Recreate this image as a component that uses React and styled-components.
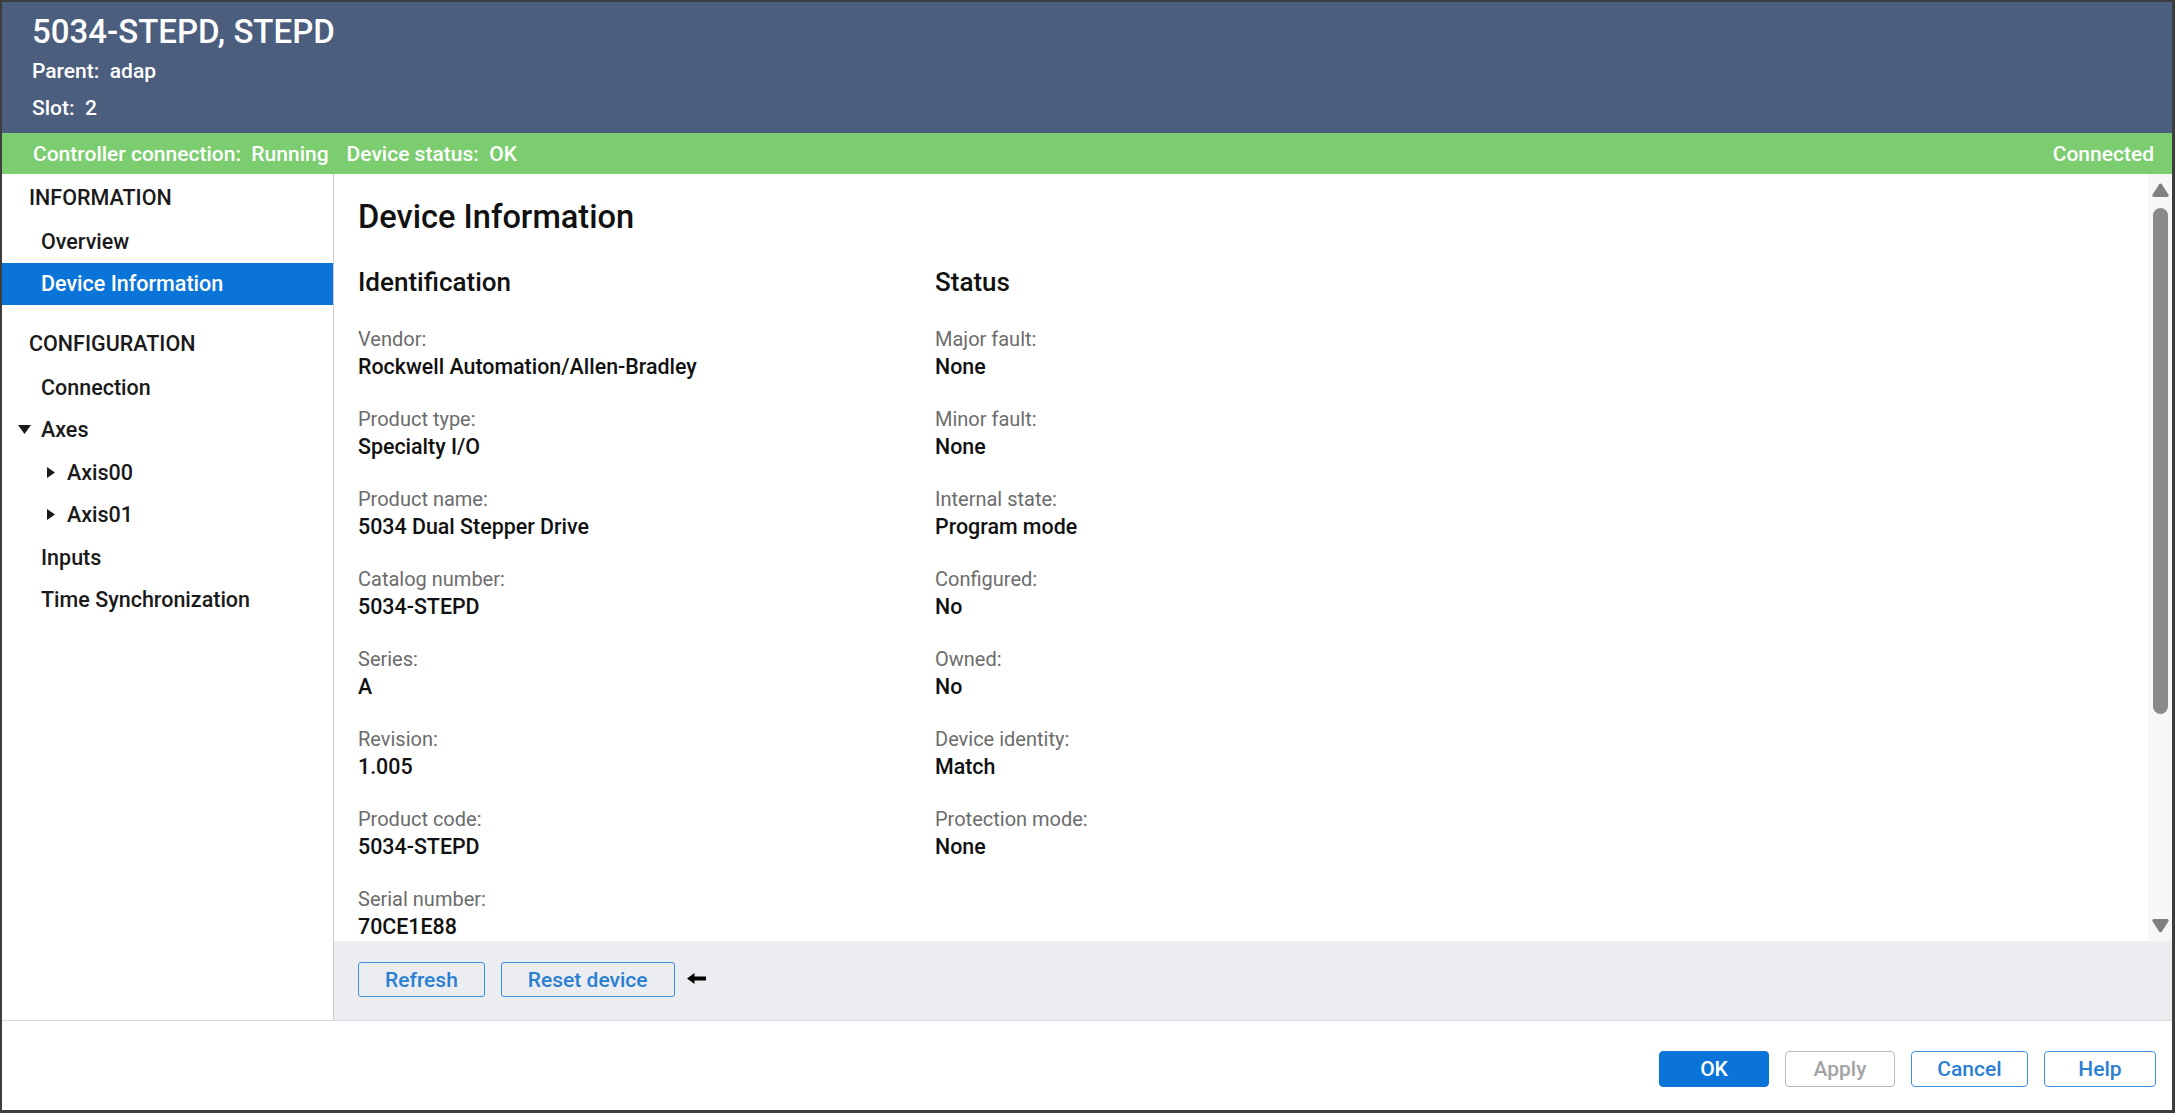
import React from 'react'
import styled, { createGlobalStyle } from 'styled-components'

const GlobalStyle = createGlobalStyle`
  html, body {
    margin: 0;
    padding: 0;
    background: #ffffff;
  }
  body {
    font-family: Roboto, "Liberation Sans", Arial, sans-serif;
  }
  * {
    box-sizing: border-box;
  }
`

const Window = styled.div`
  width: 2175px;
  height: 1113px;
  display: flex;
  flex-direction: column;
  background: #ffffff;
  border-style: solid;
  border-color: #3d3d3d;
  border-width: 2px 3px 3px 2px;
  overflow: hidden;
`

const Header = styled.header`
  height: 131px;
  flex: none;
  padding: 10px 30px 0;
  background: #4b5e7e;
  color: #ffffff;
`

const Title = styled.h1`
  margin: 0;
  font-size: 33px;
  line-height: 40px;
  font-weight: 500;
`

const HeaderLine = styled.div`
  font-size: 21px;
  font-weight: 500;
  line-height: ${(p) => p.$lh}px;
  white-space: pre;
`

const StatusBar = styled.div`
  height: 41px;
  flex: none;
  display: flex;
  align-items: center;
  gap: 18px;
  padding: 0 18px 0 31px;
  background: #7ccd70;
  color: #ffffff;
  font-size: 21px;
  font-weight: 500;
  white-space: pre;
`

const Connected = styled.span`
  margin-left: auto;
`

const Body = styled.div`
  flex: 1;
  display: flex;
  min-height: 0;
`

const Sidebar = styled.nav`
  width: 332px;
  flex: none;
  border-right: 1px solid #c9cbcf;
  display: flex;
  flex-direction: column;
`

const SectionTitle = styled.div`
  height: 46px;
  display: flex;
  align-items: center;
  padding-left: 27px;
  margin-top: ${(p) => (p.$first ? 0 : 15)}px;
  font-size: 21.5px;
  font-weight: 500;
  color: #1a1a1a;
`

const NavItem = styled.div`
  height: 42.5px;
  flex: none;
  display: flex;
  align-items: center;
  padding-left: ${(p) => p.$indent}px;
  font-size: 21.5px;
  font-weight: 500;
  color: ${(p) => (p.$selected ? '#ffffff' : '#1a1a1a')};
  background: ${(p) => (p.$selected ? '#0b74d8' : 'transparent')};
`

const CaretBox = styled.span`
  width: ${(p) => p.$w}px;
  flex: none;
  display: flex;
  align-items: center;
`

const Content = styled.main`
  flex: 1;
  display: flex;
  flex-direction: column;
  min-width: 0;
`

const ScrollArea = styled.div`
  flex: 1;
  display: flex;
  min-height: 0;
  overflow: hidden;
`

const Page = styled.section`
  flex: 1;
  padding: 23px 24px 0;
  color: #111111;
`

const PageTitle = styled.h2`
  margin: 0;
  font-size: 32.6px;
  line-height: 40px;
  font-weight: 500;
`

const Columns = styled.div`
  display: grid;
  grid-template-columns: 577px 1fr;
  margin-top: 29px;
`

const GroupTitle = styled.h3`
  margin: 0 0 27px;
  font-size: 26px;
  line-height: 32px;
  font-weight: 500;
`

const Field = styled.div`
  margin-bottom: 24px;
`

const Label = styled.div`
  font-size: 20px;
  line-height: 28px;
  color: #6c6c6c;
`

const Value = styled.div`
  font-size: 21.4px;
  line-height: 28px;
  font-weight: 500;
  color: #111111;
`

const Scrollbar = styled.div`
  width: 24px;
  flex: none;
  display: flex;
  flex-direction: column;
  align-items: center;
  padding: 9px 0 8px;
  background: #f7f7f7;
`

const Thumb = styled.div`
  width: 15px;
  height: 506px;
  margin-top: 11px;
  border-radius: 8px;
  background: #8a8a8a;
`

const DownArrow = styled.div`
  margin-top: auto;
  display: flex;
`

const ActionBar = styled.div`
  height: 79px;
  flex: none;
  display: flex;
  align-items: flex-start;
  gap: 16px;
  padding: 21px 24px 0;
  background: #ebedf0;
`

const OutlineButton = styled.button`
  height: 35px;
  padding: 0 26px;
  border: 1.5px solid #3f8fdf;
  border-radius: 3px;
  background: transparent;
  color: #2a7fd3;
  font-family: inherit;
  font-size: 21px;
  font-weight: 500;
`

const Pointer = styled.span`
  height: 35px;
  display: flex;
  align-items: center;
  margin-top: -1px;
  margin-left: -4px;
`

const Footer = styled.footer`
  height: 90px;
  flex: none;
  display: flex;
  justify-content: flex-end;
  align-items: flex-start;
  gap: 16px;
  padding: 30px 16px 0 0;
  border-top: 1px solid #d6d8dc;
`

const DialogButton = styled.button`
  width: ${(p) => p.$w || 110}px;
  height: 36px;
  border-radius: 4px;
  font-family: inherit;
  font-size: 21px;
  font-weight: 500;
  border: 1.5px solid
    ${(p) => (p.$variant === 'primary' ? '#0b74d8' : p.$variant === 'disabled' ? '#b9b9b9' : '#3f8fdf')};
  background: ${(p) => (p.$variant === 'primary' ? '#0b74d8' : '#ffffff')};
  color: ${(p) => (p.$variant === 'primary' ? '#ffffff' : p.$variant === 'disabled' ? '#a3a3a3' : '#2a7fd3')};
`

const CaretDown = () => (
  <svg width="13" height="9" viewBox="0 0 13 9">
    <path d="M0 0 H13 L6.5 9 Z" fill="#1a1a1a" />
  </svg>
)

const CaretRight = () => (
  <svg width="8" height="11" viewBox="0 0 8 11">
    <path d="M0 0 L8 5.5 L0 11 Z" fill="#1a1a1a" />
  </svg>
)

const ScrollUp = () => (
  <svg width="17" height="14" viewBox="0 0 17 14">
    <path d="M7.2 1.2 Q8.5 -0.4 9.8 1.2 L16.4 11.6 Q17.3 14 14.8 14 H2.2 Q-0.3 14 0.6 11.6 Z" fill="#808080" />
  </svg>
)

const ScrollDown = () => (
  <svg width="17" height="14" viewBox="0 0 17 14">
    <path d="M7.2 12.8 Q8.5 14.4 9.8 12.8 L16.4 2.4 Q17.3 0 14.8 0 H2.2 Q-0.3 0 0.6 2.4 Z" fill="#808080" />
  </svg>
)

const LeftArrow = () => (
  <svg width="19" height="11" viewBox="0 0 19 11">
    <path d="M0 5.5 L7.5 0 V3.5 H19 V7.5 H7.5 V11 Z" fill="#000000" />
  </svg>
)

const identification = [
  ['Vendor:', 'Rockwell Automation/Allen-Bradley'],
  ['Product type:', 'Specialty I/O'],
  ['Product name:', '5034 Dual Stepper Drive'],
  ['Catalog number:', '5034-STEPD'],
  ['Series:', 'A'],
  ['Revision:', '1.005'],
  ['Product code:', '5034-STEPD'],
  ['Serial number:', '70CE1E88'],
]

const status = [
  ['Major fault:', 'None'],
  ['Minor fault:', 'None'],
  ['Internal state:', 'Program mode'],
  ['Configured:', 'No'],
  ['Owned:', 'No'],
  ['Device identity:', 'Match'],
  ['Protection mode:', 'None'],
]

function FieldList({ title, rows }) {
  return (
    <div>
      <GroupTitle>{title}</GroupTitle>
      {rows.map(([label, value]) => (
        <Field key={label}>
          <Label>{label}</Label>
          <Value>{value}</Value>
        </Field>
      ))}
    </div>
  )
}

export default function App() {
  return (
    <>
      <GlobalStyle />
      <Window>
        <Header>
          <Title>5034-STEPD, STEPD</Title>
          <HeaderLine $lh={38}>{'Parent:  adap'}</HeaderLine>
          <HeaderLine $lh={36}>{'Slot:  2'}</HeaderLine>
        </Header>

        <StatusBar>
          <span>{'Controller connection:  Running'}</span>
          <span>{'Device status:  OK'}</span>
          <Connected>Connected</Connected>
        </StatusBar>

        <Body>
          <Sidebar>
            <SectionTitle $first>INFORMATION</SectionTitle>
            <NavItem $indent={39}>Overview</NavItem>
            <NavItem $indent={39} $selected>Device Information</NavItem>

            <SectionTitle>CONFIGURATION</SectionTitle>
            <NavItem $indent={39}>Connection</NavItem>
            <NavItem $indent={16}>
              <CaretBox $w={23}><CaretDown /></CaretBox>
              Axes
            </NavItem>
            <NavItem $indent={45}>
              <CaretBox $w={20}><CaretRight /></CaretBox>
              Axis00
            </NavItem>
            <NavItem $indent={45}>
              <CaretBox $w={20}><CaretRight /></CaretBox>
              Axis01
            </NavItem>
            <NavItem $indent={39}>Inputs</NavItem>
            <NavItem $indent={39}>Time Synchronization</NavItem>
          </Sidebar>

          <Content>
            <ScrollArea>
              <Page>
                <PageTitle>Device Information</PageTitle>
                <Columns>
                  <FieldList title="Identification" rows={identification} />
                  <FieldList title="Status" rows={status} />
                </Columns>
              </Page>
              <Scrollbar>
                <ScrollUp />
                <Thumb />
                <DownArrow><ScrollDown /></DownArrow>
              </Scrollbar>
            </ScrollArea>

            <ActionBar>
              <OutlineButton>Refresh</OutlineButton>
              <OutlineButton>Reset device</OutlineButton>
              <Pointer><LeftArrow /></Pointer>
            </ActionBar>
          </Content>
        </Body>

        <Footer>
          <DialogButton $variant="primary">OK</DialogButton>
          <DialogButton $variant="disabled">Apply</DialogButton>
          <DialogButton $w={117}>Cancel</DialogButton>
          <DialogButton $w={112}>Help</DialogButton>
        </Footer>
      </Window>
    </>
  )
}
